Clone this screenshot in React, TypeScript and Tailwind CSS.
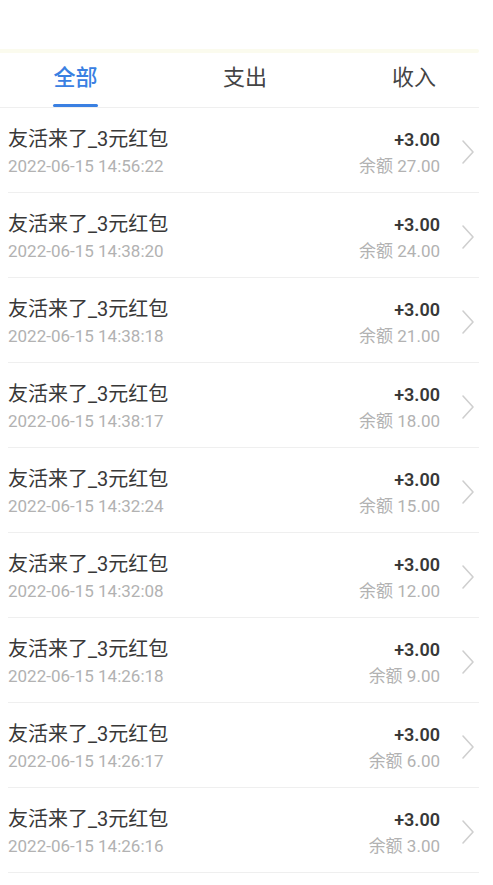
import React from "react";

const rows = [
  { t: "2022-06-15 14:56:22", b: "27.00" },
  { t: "2022-06-15 14:38:20", b: "24.00" },
  { t: "2022-06-15 14:38:18", b: "21.00" },
  { t: "2022-06-15 14:38:17", b: "18.00" },
  { t: "2022-06-15 14:32:24", b: "15.00" },
  { t: "2022-06-15 14:32:08", b: "12.00" },
  { t: "2022-06-15 14:26:18", b: "9.00" },
  { t: "2022-06-15 14:26:17", b: "6.00" },
  { t: "2022-06-15 14:26:16", b: "3.00" },
];

export default function App() {
  return (
    <div
      className="w-[493px] h-[885px] bg-white overflow-hidden"
      style={{ fontFamily: "Roboto, 'Noto Sans CJK SC', sans-serif" }}
    >
      <div className="h-[49px]" />
      <div className="w-[479px] h-[4px] bg-[#fbfbee] rounded-r-full" />
      <div className="w-[479px] h-[55px] flex justify-between items-stretch pl-[53px] pr-[43px] border-b border-[#efefef]">
        <div className="flex flex-col items-center justify-end">
          <span className="text-[22px] leading-[30px] text-[#3a80e2] font-medium">全部</span>
          <div className="mt-[11px] w-[45px] h-[3px] bg-[#3a80e2] rounded-full" />
        </div>
        <div className="flex flex-col items-center justify-end">
          <span className="text-[22px] leading-[30px] text-[#444]">支出</span>
          <div className="mt-[11px] h-[3px]" />
        </div>
        <div className="flex flex-col items-center justify-end">
          <span className="text-[22px] leading-[30px] text-[#444]">收入</span>
          <div className="mt-[11px] h-[3px]" />
        </div>
      </div>
      <div className="flex flex-col">
        {rows.map((r, i) => (
          <div key={i} className="ml-[8px] w-[471px] h-[85px] border-b border-[#efefef] flex items-start">
            <div className="flex-1 pt-[18px] flex flex-col">
              <span className="text-[20px] leading-[27px] text-[#383838]">友活来了_3元红包</span>
              <span className="text-[17px] leading-[27px] text-[#b2b2b2]">{r.t}</span>
            </div>
            <div className="pt-[18px] flex flex-col items-end">
              <span className="text-[18px] leading-[27px] text-[#383838] font-semibold">+3.00</span>
              <span className="text-[17px] leading-[27px] text-[#b2b2b2]">余额 {r.b}</span>
            </div>
            <div className="w-[39px] h-full flex items-center justify-center">
              <svg width="14" height="26" viewBox="0 0 14 26" className="mt-[4px] ml-[17px]">
                <path d="M2 2 L12 13 L2 24" fill="none" stroke="#cfcfcf" strokeWidth="1.6" strokeLinecap="round" strokeLinejoin="round" />
              </svg>
            </div>
          </div>
        ))}
      </div>
    </div>
  );
}
